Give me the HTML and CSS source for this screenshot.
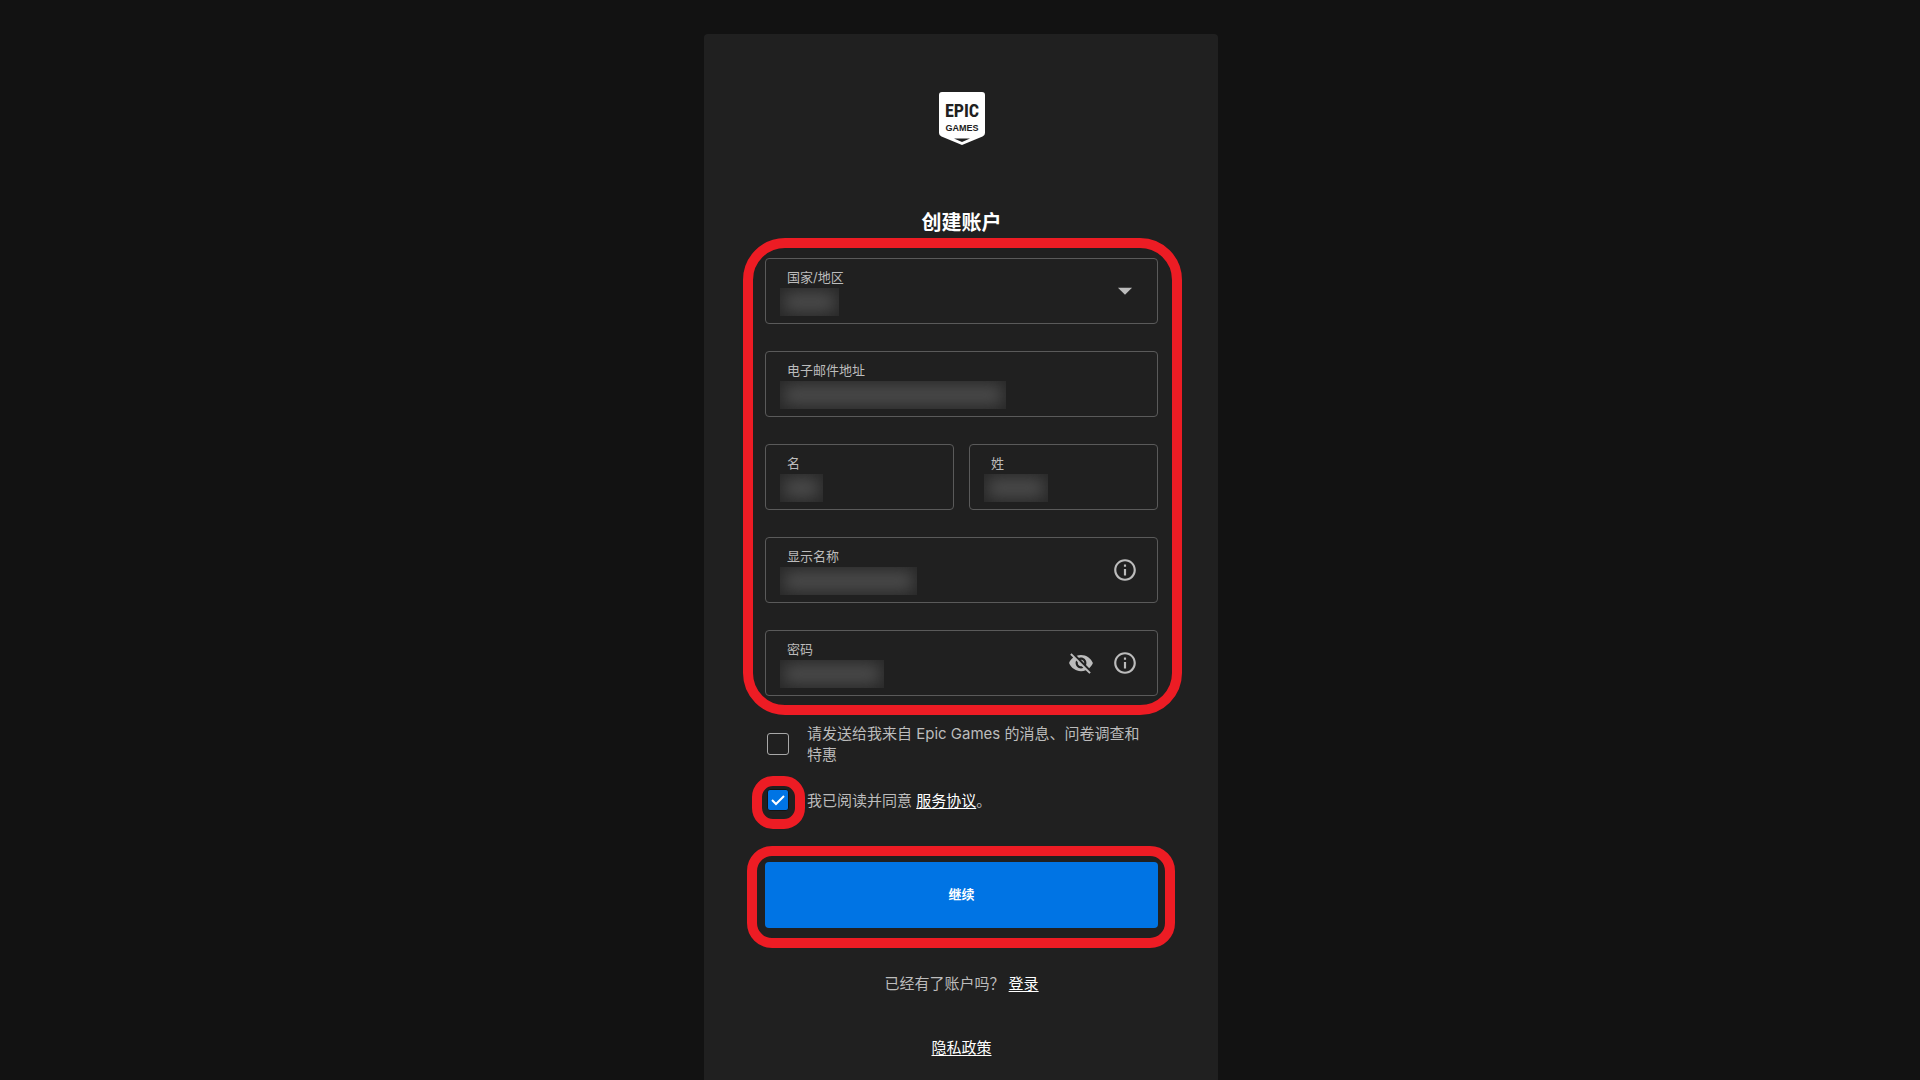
FILE: index.html
```html
<!DOCTYPE html>
<html lang="zh-CN">
<head>
  <meta charset="UTF-8">
  <meta name="viewport" content="width=device-width, initial-scale=1.0">
  <title>创建账户</title>
  <link rel="stylesheet" href="styles.css">
</head>
<body>
  <main class="card">
    <svg class="logo" viewBox="0 0 46 53" role="img" aria-label="Epic Games">
      <path d="M3 0H43Q46 0 46 3V41Q46 43.500 43.500 44.500L23 53L2.500 44.500Q0 43.500 0 41V3Q0 0 3 0Z" fill="#fff"/>
      <path d="M15 46.500H31L23 50Z" fill="#202020"/>
      <text class="logo-epic" x="23" y="25" text-anchor="middle">EPIC</text>
      <text class="logo-games" x="23" y="39" text-anchor="middle">GAMES</text>
    </svg>

    <h1>创建账户</h1>

    <form>
      <div class="fields ring">
        <div class="field">
          <div class="field-main">
            <label for="country">国家/地区</label>
            <select id="country"><option></option></select>
            <span class="blur blur-country"></span>
          </div>
          <svg class="icon" viewBox="0 0 24 24"><path d="M5.500 9H18.500L12 15.500Z"/></svg>
        </div>

        <div class="field">
          <div class="field-main">
            <label for="email">电子邮件地址</label>
            <input type="email" id="email">
            <span class="blur blur-email"></span>
          </div>
        </div>

        <div class="field-row">
          <div class="field">
            <div class="field-main">
              <label for="firstName">名</label>
              <input type="text" id="firstName">
              <span class="blur blur-first"></span>
            </div>
          </div>
          <div class="field">
            <div class="field-main">
              <label for="lastName">姓</label>
              <input type="text" id="lastName">
              <span class="blur blur-last"></span>
            </div>
          </div>
        </div>

        <div class="field">
          <div class="field-main">
            <label for="displayName">显示名称</label>
            <input type="text" id="displayName">
            <span class="blur blur-display"></span>
          </div>
          <button type="button" class="icon-btn" aria-label="显示名称说明">
            <svg class="icon" viewBox="0 0 24 24"><path d="M11 7h2v2h-2zm0 4h2v6h-2zm1-9C6.480 2 2 6.480 2 12s4.480 10 10 10 10-4.480 10-10S17.520 2 12 2zm0 18c-4.410 0-8-3.590-8-8s3.590-8 8-8 8 3.590 8 8-3.590 8-8 8z"/></svg>
          </button>
        </div>

        <div class="field">
          <div class="field-main">
            <label for="password">密码</label>
            <input type="password" id="password">
            <span class="blur blur-password"></span>
          </div>
          <button type="button" class="icon-btn" aria-label="显示密码">
            <svg class="icon" viewBox="0 0 24 24"><path d="M12 7c2.760 0 5 2.240 5 5 0 .65-.13 1.260-.36 1.830l2.920 2.920c1.510-1.260 2.700-2.890 3.430-4.750-1.730-4.390-6-7.500-11-7.500-1.400 0-2.740.25-3.980.7l2.160 2.160C10.740 7.130 11.350 7 12 7zM2 4.270l2.280 2.280.46.46C3.080 8.300 1.780 10.020 1 12c1.730 4.390 6 7.500 11 7.500 1.550 0 3.030-.3 4.380-.84l.42.42L19.730 22 21 20.730 3.270 3 2 4.270zM7.530 9.800l1.550 1.550c-.05.21-.08.43-.08.65 0 1.660 1.340 3 3 3 .22 0 .44-.03.65-.08l1.550 1.550c-.67.33-1.410.53-2.200.53-2.760 0-5-2.240-5-5 0-.79.2-1.530.53-2.200zm4.310-.78l3.150 3.150.02-.16c0-1.660-1.340-3-3-3l-.17.01z"/></svg>
          </button>
          <button type="button" class="icon-btn" aria-label="密码说明">
            <svg class="icon" viewBox="0 0 24 24"><path d="M11 7h2v2h-2zm0 4h2v6h-2zm1-9C6.480 2 2 6.480 2 12s4.480 10 10 10 10-4.480 10-10S17.520 2 12 2zm0 18c-4.410 0-8-3.590-8-8s3.590-8 8-8 8 3.590 8 8-3.590 8-8 8z"/></svg>
          </button>
        </div>
      </div>

      <div class="check-row">
        <span class="check"><input type="checkbox" id="news"></span>
        <label for="news">请发送给我来自 Epic Games 的消息、问卷调查和特惠</label>
      </div>
      <div class="check-row">
        <span class="check ring ring-check">
          <input type="checkbox" id="terms" checked>
          <svg class="tick" viewBox="0 0 22 22"><path d="M5 11L9 15L17 7"/></svg>
        </span>
        <label for="terms">我已阅读并同意 <a href="#">服务协议</a>。</label>
      </div>

      <div class="submit ring ring-submit">
        <button type="submit">继续</button>
      </div>
    </form>

    <p class="login">已经有了账户吗？ <a href="#">登录</a></p>
    <p class="privacy"><a href="#">隐私政策</a></p>
  </main>
</body>
</html>
```

FILE: styles.css
```css
* { margin: 0; padding: 0; box-sizing: border-box; }

body {
  display: flex;
  justify-content: center;
  min-height: 100vh;
  padding: 34px 0 0 2px;
  background: #121212;
  color: #bcbcbc;
  font-family: Inter, "Noto Sans CJK SC", sans-serif;
  font-size: 15px;
  line-height: 21px;
}

a { color: #fff; text-underline-offset: 2px; }

.card {
  display: flex;
  flex-direction: column;
  width: 100%;
  max-width: 514px;
  padding: 58px 60px 20px 61px;
  background: #202020;
  border-radius: 4px 4px 0 0;
}

.logo {
  width: 46px;
  height: 53px;
  margin: 0 auto 64px;
}
.logo text { fill: #202020; font-weight: bold; }
.logo-epic { font-family: "Roboto Condensed", "Liberation Sans Narrow", "Liberation Sans", sans-serif; font-size: 18px; }
.logo-games { font-family: "Liberation Sans", sans-serif; font-size: 9px; }

h1 {
  margin-bottom: 21px;
  color: #fff;
  font-size: 20px;
  line-height: 28px;
  text-align: center;
}

/* red highlight around the parts to fill in */
.ring { position: relative; }
.ring::after {
  content: "";
  position: absolute;
  inset: -20px -24px -19px -22px;
  border: 10px solid #ed1c24;
  border-radius: 42px;
  pointer-events: none;
}
.ring-check::after { inset: -13px -16px -18px -15px; border-radius: 21px; }
.ring-submit::after { inset: -16px -17px -20px -18px; border-radius: 25px; }

.fields {
  display: flex;
  flex-direction: column;
  gap: 27px;
}

.field-row {
  display: grid;
  grid-template-columns: 1fr 1fr;
  gap: 15px;
}

.field {
  display: flex;
  align-items: center;
  gap: 18px;
  height: 66px;
  padding: 0 19px 0 14px;
  border: 1px solid #5a5a5a;
  border-radius: 4px;
}

.field-main {
  position: relative;
  flex: 1;
  min-width: 0;
}
.field-main label {
  display: block;
  padding-left: 7px;
  font-size: 13px;
  line-height: 18px;
}
.field-main input,
.field-main select {
  display: block;
  appearance: none;
  width: 100%;
  height: 28px;
  padding-left: 7px;
  background: transparent;
  border: none;
  outline: none;
  color: #fff;
  font: inherit;
}

.blur {
  position: absolute;
  left: 0;
  bottom: -2px;
  height: 28px;
  background: #4c4c4c;
  box-shadow: inset 0 0 16px 4px #272727;
}
.blur-country { width: 59px; }
.blur-email { width: 226px; }
.blur-first { width: 43px; }
.blur-last { width: 64px; }
.blur-display { width: 137px; }
.blur-password { width: 104px; }

.icon-btn {
  display: flex;
  background: none;
  border: none;
  cursor: pointer;
}
.icon {
  width: 26px;
  height: 26px;
  fill: #bcbcbc;
}

.check-row {
  display: flex;
  align-items: center;
  gap: 18px;
  margin-top: 24px;
  padding: 0 12px 0 2px;
}
.fields + .check-row { margin-top: 27px; }

.check {
  flex: none;
  width: 22px;
  height: 22px;
}
.check input {
  display: block;
  appearance: none;
  width: 22px;
  height: 22px;
  border: 1px solid #a8a8a8;
  border-radius: 3px;
  cursor: pointer;
}
.check input:checked {
  background: #0074e4;
  border-color: #121212;
}
.tick {
  position: absolute;
  inset: 0;
  fill: none;
  stroke: #fff;
  stroke-width: 2;
  pointer-events: none;
}

.submit { margin-top: 51px; }
.submit button {
  display: block;
  width: 100%;
  height: 66px;
  padding-bottom: 4px;
  background: #0074e4;
  border: none;
  border-radius: 4px;
  color: #fff;
  font: bold 13px Inter, "Noto Sans CJK SC", sans-serif;
  cursor: pointer;
}

.login, .privacy { text-align: center; }
.login { margin-top: 45px; }
.privacy { margin-top: 43px; }
```
